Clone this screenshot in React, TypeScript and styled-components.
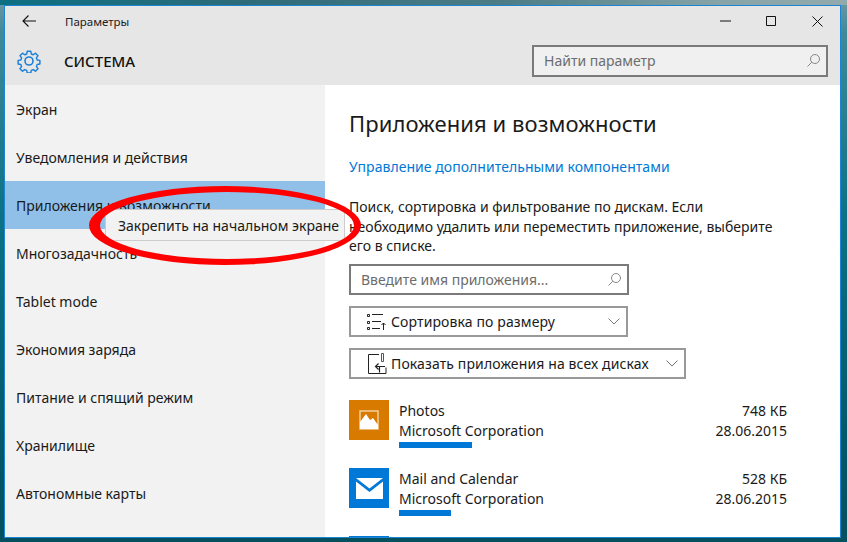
import styled, { createGlobalStyle } from 'styled-components';

const GlobalStyle = createGlobalStyle`
  html, body {
    margin: 0;
    padding: 0;
    width: 847px;
    height: 542px;
    overflow: hidden;
  }
  * {
    box-sizing: border-box;
  }
`;

const Desktop = styled.div`
  position: relative;
  width: 847px;
  height: 542px;
  padding: 5px 6px 4px 4px;
  overflow: hidden;
  background:
    linear-gradient(90deg, #0b7082 0%, #2f6b79 30%, #4d7d87 60%, #86a4a8 85%, #93aaad 100%) top / 100% 5px no-repeat,
    linear-gradient(180deg, #6f97a0 0%, #3f8a99 6%, #0b7285 40%, #03596a 80%, #04505f 100%);
  font-family: 'Noto Sans', 'Open Sans', sans-serif;
  color: #1a1a1a;
`;

const Window = styled.div`
  display: flex;
  flex-direction: column;
  height: 533px;
  border: 1px solid #1c84d0;
  background: #fff;
  overflow: hidden;
`;

const Header = styled.header`
  flex: none;
  height: 79px;
  background: #e6e6e6;
`;

const TitleBar = styled.div`
  display: flex;
  align-items: center;
  height: 30px;
`;

const BackButton = styled.button`
  display: flex;
  align-items: center;
  justify-content: center;
  width: 48px;
  height: 30px;
  padding: 0;
  border: 0;
  background: none;
`;

const WindowTitle = styled.div`
  margin-left: 12px;
  font-size: 11.5px;
  color: #222;
`;

const WindowControls = styled.div`
  display: flex;
  margin-left: auto;
`;

const ControlButton = styled.div`
  display: flex;
  align-items: center;
  justify-content: center;
  width: 46px;
  height: 30px;
`;

const SystemRow = styled.div`
  display: flex;
  align-items: center;
  height: 49px;
  padding: 1px 12px 0 12px;
`;

const SystemTitle = styled.div`
  margin-left: 23px;
  padding-bottom: 1px;
  font-size: 15px;
  font-weight: 500;
  color: #111;
`;

const HeaderSearch = styled.div`
  display: flex;
  align-items: center;
  justify-content: space-between;
  width: 296px;
  height: 32px;
  margin-left: auto;
  padding: 0 6px 1px 10px;
  border: 2px solid #7a7a7a;
  background: #f0f0f0;
  font-size: 14px;
  color: #6d6d6d;
`;

const Body = styled.div`
  display: flex;
  flex: 1;
  min-height: 0;
`;

const Sidebar = styled.nav`
  flex: none;
  width: 320px;
  background: #f2f2f2;
`;

const NavItem = styled.div<{ $active?: boolean }>`
  display: flex;
  align-items: center;
  height: 48px;
  padding-left: 11px;
  font-size: 14px;
  color: #1a1a1a;
  background: ${({ $active }) => ($active ? '#90c0e8' : 'transparent')};
`;

const Content = styled.main`
  flex: 1;
  min-width: 0;
  padding: 20px 53px 0 24px;
  background: #fff;
`;

const PageTitle = styled.h1`
  margin: 0;
  font-size: 22px;
  line-height: 36px;
  font-weight: 400;
  letter-spacing: 0.08px;
  color: #1a1a1a;
`;

const ManageLink = styled.a`
  display: block;
  margin-top: 16px;
  font-size: 14px;
  line-height: 20px;
  letter-spacing: 0.05px;
  color: #0078d7;
`;

const Description = styled.p`
  margin: 20px 0 0;
  width: 440px;
  font-size: 14px;
  line-height: 19.7px;
  color: #1a1a1a;
`;

const SearchField = styled.div`
  display: flex;
  align-items: center;
  justify-content: space-between;
  width: 280px;
  height: 31px;
  margin-top: 8px;
  padding: 0 6px 0 10px;
  border: 2px solid #7a7a7a;
  font-size: 14px;
  color: #6d6d6d;
`;

const SelectField = styled.div<{ $width: number }>`
  display: flex;
  align-items: center;
  gap: 4px;
  width: ${({ $width }) => $width}px;
  height: 31px;
  margin-top: 11px;
  padding: 0 6px 0 15px;
  border: 2px solid #999;
  font-size: 14px;
  letter-spacing: 0.12px;
  color: #1a1a1a;
`;

const SelectChevron = styled.svg`
  flex: none;
  margin-left: auto;
`;

const AppList = styled.div`
  margin-top: 21px;
`;

const AppRow = styled.div`
  display: flex;
  gap: 10px;
  width: 438px;
  height: 68px;
`;

const AppTile = styled.div<{ $color: string }>`
  display: flex;
  flex: none;
  align-items: center;
  justify-content: center;
  width: 40px;
  height: 40px;
  background: ${({ $color }) => $color};
`;

const AppInfo = styled.div`
  flex: 1;
  padding-top: 1px;
  font-size: 14px;
  line-height: 20px;
`;

const AppMeta = styled.div`
  padding-top: 1px;
  font-size: 14px;
  line-height: 20px;
  text-align: right;
`;

const SizeBar = styled.div<{ $width: number }>`
  width: ${({ $width }) => $width}px;
  height: 6px;
  margin-top: 1px;
  background: #0078d7;
`;

const ContextMenu = styled.div`
  position: absolute;
  left: 105px;
  top: 209px;
  display: flex;
  align-items: center;
  width: 240px;
  height: 32px;
  padding-left: 12px;
  border: 1px solid #ccc;
  background: #f2f2f2;
  font-size: 14px;
  color: #1a1a1a;
`;

const RedRing = styled.svg`
  position: absolute;
  left: 80px;
  top: 180px;
  pointer-events: none;
`;

const navItems = [
  'Экран',
  'Уведомления и действия',
  'Приложения и возможности',
  'Многозадачность',
  'Tablet mode',
  'Экономия заряда',
  'Питание и спящий режим',
  'Хранилище',
  'Автономные карты',
  'Приложения по умолчанию',
];

const apps = [
  { name: 'Photos', size: '748 КБ', bar: 73, color: '#d97a00', icon: 'photo' },
  { name: 'Mail and Calendar', size: '528 КБ', bar: 52, color: '#0078d7', icon: 'mail' },
  { name: '', size: '', bar: 0, color: '#0078d7', icon: '' },
];

const SearchGlyph = () => (
  <svg width="13" height="13" viewBox="0 0 13 13" fill="none" stroke="#888" strokeWidth="1">
    <circle cx="8" cy="5" r="4.5" />
    <path d="M4.8 8.200.5 12.500" />
  </svg>
);

const Chevron = () => (
  <SelectChevron width="12" height="7" viewBox="0 0 12 7" fill="none" stroke="#777" strokeWidth="1">
    <path d="M.5.500 6 6l5.500-5.500" />
  </SelectChevron>
);

const Gear = () => (
  <svg width="24" height="24" viewBox="0 0 24 24" fill="none" stroke="#1b80d6" strokeWidth="1.6" strokeLinejoin="round">
    <path d="M10 1.200h4l.5 3 2.200.9 2.500-1.800 2.800 2.800-1.800 2.500.9 2.200 3 .5v4l-3 .5-.9 2.200 1.800 2.500-2.800 2.800-2.500-1.800-2.200.9-.5 3h-4l-.5-3-2.200-.9-2.500 1.800-2.800-2.800 1.800-2.500-.9-2.200-3-.5v-4l3-.5.9-2.200L2 6.100l2.800-2.800 2.500 1.800 2.200-.9z" transform="translate(1.200 1.200) scale(.9)" />
    <circle cx="12" cy="12" r="4" />
  </svg>
);

export default function App() {
  return (
    <Desktop>
      <GlobalStyle />
      <Window>
        <Header>
          <TitleBar>
            <BackButton aria-label="Назад">
              <svg width="14" height="12" viewBox="0 0 14 12" fill="none" stroke="#111" strokeWidth="1.1">
                <path d="M14 6H1M6.500.5 1 6l5.500 5.500" />
              </svg>
            </BackButton>
            <WindowTitle>Параметры</WindowTitle>
            <WindowControls>
              <ControlButton>
                <svg width="11" height="2" viewBox="0 0 11 2"><path d="M0 1h11" stroke="#111" /></svg>
              </ControlButton>
              <ControlButton>
                <svg width="10" height="10" viewBox="0 0 10 10" fill="none" stroke="#111"><path d="M.5.500h9v9h-9z" /></svg>
              </ControlButton>
              <ControlButton>
                <svg width="11" height="11" viewBox="0 0 11 11" fill="none" stroke="#111"><path d="m.5.500 10 10m0-10-10 10" /></svg>
              </ControlButton>
            </WindowControls>
          </TitleBar>
          <SystemRow>
            <Gear />
            <SystemTitle>СИСТЕМА</SystemTitle>
            <HeaderSearch>
              Найти параметр
              <SearchGlyph />
            </HeaderSearch>
          </SystemRow>
        </Header>
        <Body>
          <Sidebar>
            {navItems.map((item, i) => (
              <NavItem key={item} $active={i === 2}>{item}</NavItem>
            ))}
          </Sidebar>
          <Content>
            <PageTitle>Приложения и возможности</PageTitle>
            <ManageLink>Управление дополнительными компонентами</ManageLink>
            <Description>
              Поиск, сортировка и фильтрование по дискам. Если необходимо удалить или переместить приложение, выберите его в списке.
            </Description>
            <SearchField>
              Введите имя приложения...
              <SearchGlyph />
            </SearchField>
            <SelectField $width={279}>
              <svg width="21" height="18" viewBox="0 0 21 18" fill="none" stroke="#222">
                <path d="M1.500 1.500h2v2h-2zM1.500 8.500h2v2h-2zM1.500 14.500h2v2h-2zM6 1.500h11M6 8.500h9M6 15.500h8" />
                <path d="M17.500 17v-7M15.500 12l2-2 2 2" />
              </svg>
              Сортировка по размеру
              <Chevron />
            </SelectField>
            <SelectField $width={337}>
              <svg width="21" height="22" viewBox="0 0 21 22" fill="none" stroke="#222">
                <path d="M13 1.500H2.500v19H20v-6" />
                <path d="M15.500.5h2v8h-2z" stroke="#555" />
                <path d="M19 13.500H9.500M12.500 10.500l-3 3 3 3M13.500 13.500v6" strokeWidth="1.2" />
              </svg>
              Показать приложения на всех дисках
              <Chevron />
            </SelectField>
            <AppList>
              {apps.map(app => (
                <AppRow key={app.name || 'next'}>
                  <AppTile $color={app.color}>
                    {app.icon === 'photo' && (
                      <svg width="20" height="20" viewBox="0 0 20 20">
                        <path d="M1 1h18v18H1z" fill="none" stroke="#f3cf9c" strokeWidth="1.500" />
                        <path d="M1 19v-7l6-8 4 6 3-2 5 7v4z" fill="#fff" />
                      </svg>
                    )}
                    {app.icon === 'mail' && (
                      <svg width="27" height="21" viewBox="0 0 27 21">
                        <path d="M0 0h27L13.500 10.500z" fill="#fff" />
                        <path d="M0 3.500 13.500 14 27 3.500V21H0z" fill="#fff" />
                      </svg>
                    )}
                  </AppTile>
                  {app.name && (
                    <>
                      <AppInfo>
                        {app.name}
                        <br />
                        Microsoft Corporation
                        <SizeBar $width={app.bar} />
                      </AppInfo>
                      <AppMeta>
                        {app.size}
                        <br />
                        28.06.2015
                      </AppMeta>
                    </>
                  )}
                </AppRow>
              ))}
            </AppList>
          </Content>
        </Body>
      </Window>
      <ContextMenu>Закрепить на начальном экране</ContextMenu>
      <RedRing width="290" height="95" viewBox="0 0 290 95">
        <path
          fillRule="evenodd"
          fill="#f00"
          d="M9 45.500a136 39.500 0 1 0 272 0a136 39.500 0 1 0-272 0zM20 45.500a127 33.500 0 1 0 254 0a127 33.500 0 1 0-254 0z"
        />
      </RedRing>
    </Desktop>
  );
}
